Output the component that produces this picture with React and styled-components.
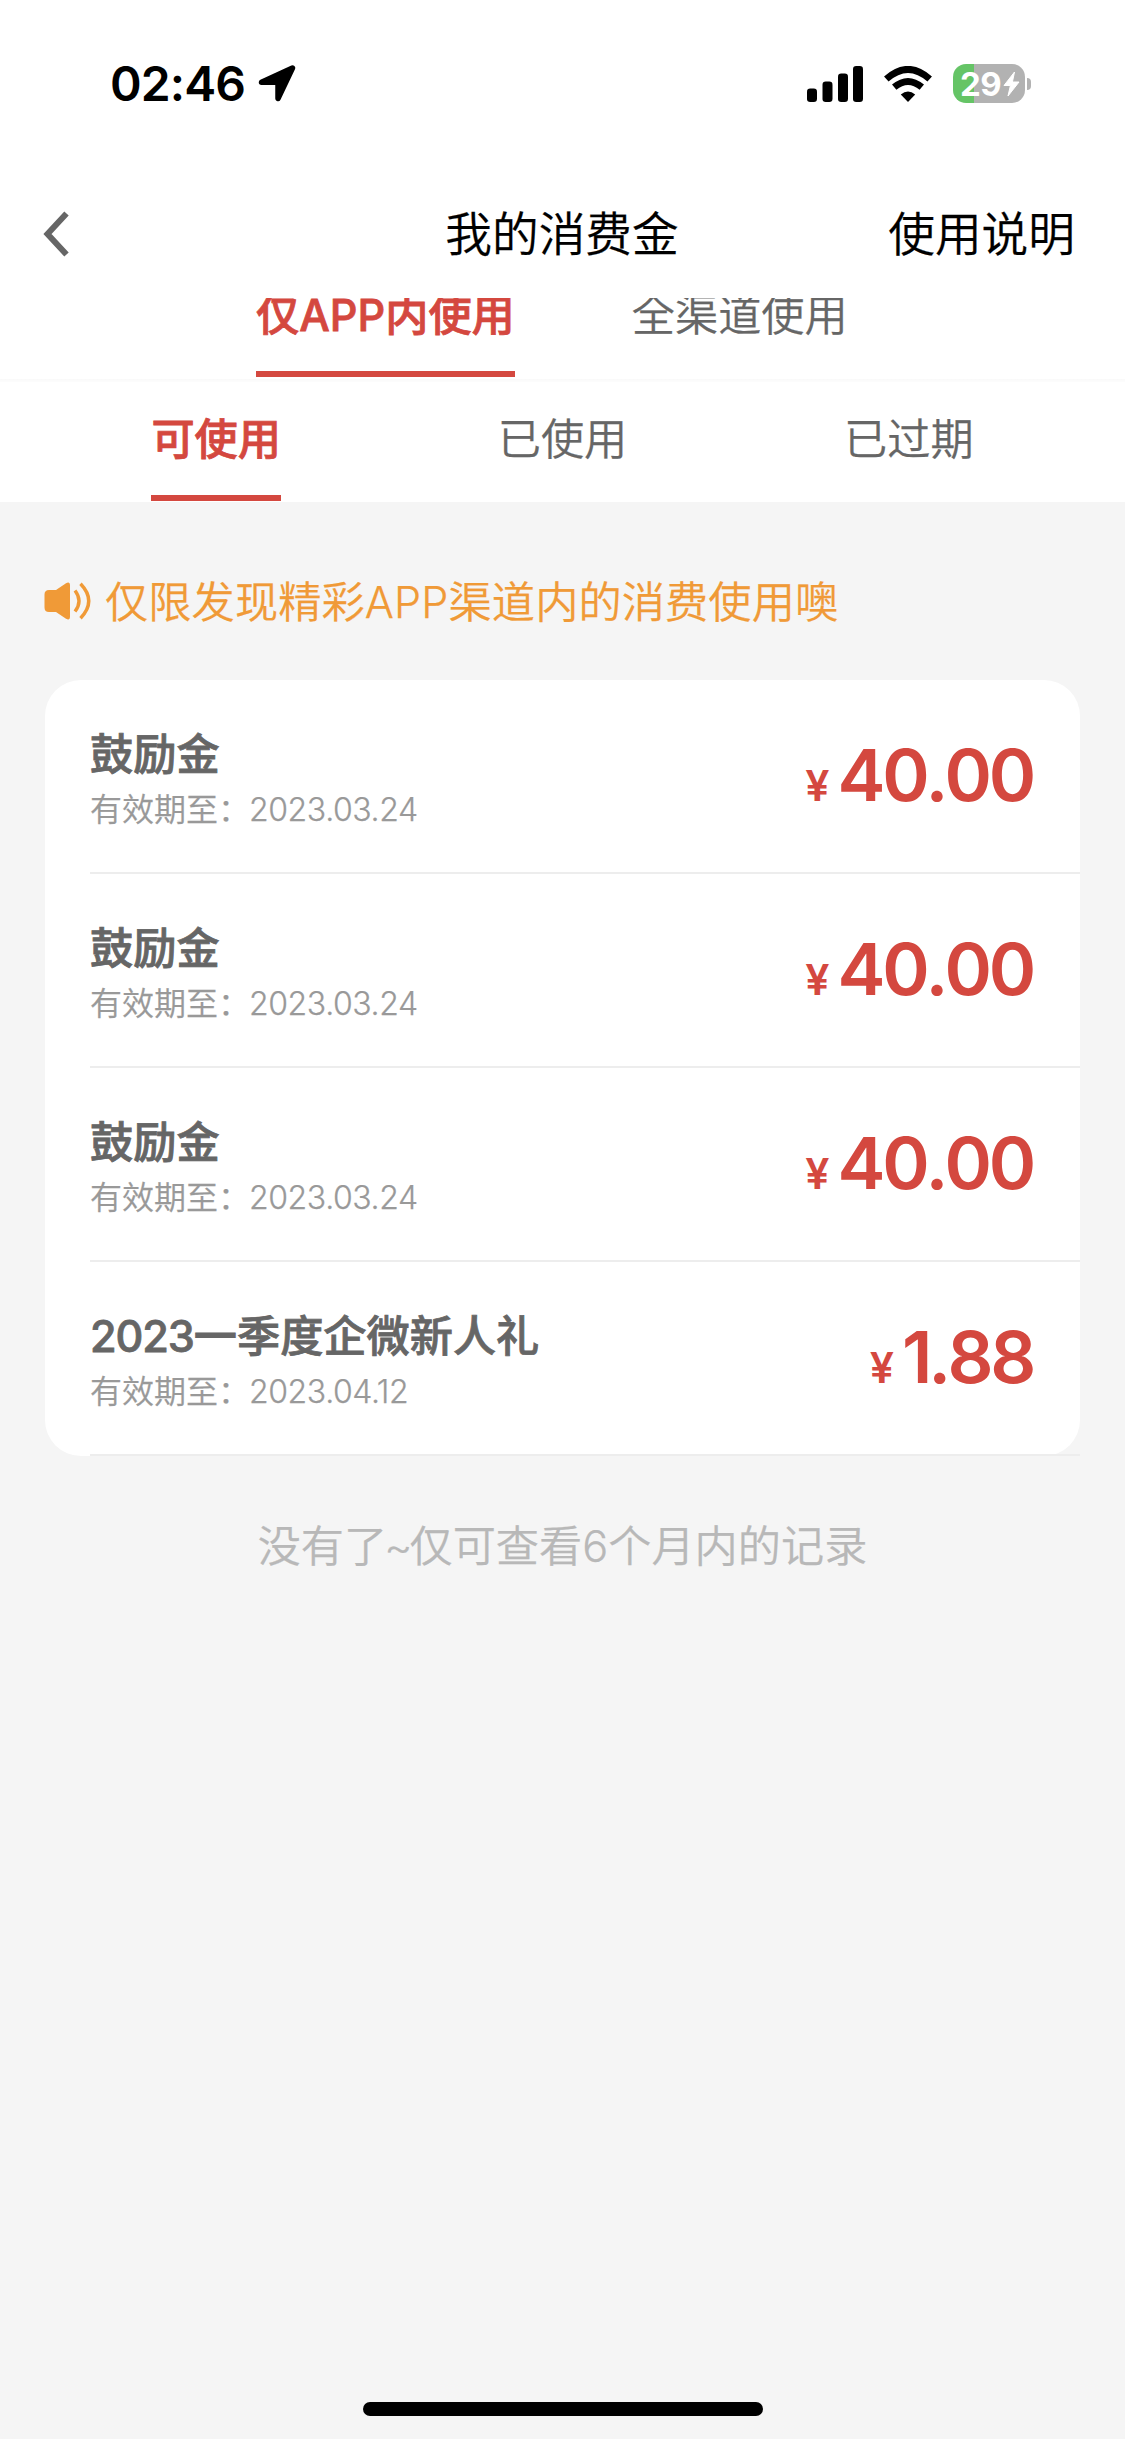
import React from "react";
import styled, { createGlobalStyle } from "styled-components";

const RED = "#d4483f";
const ORANGE = "#f09a37";

const GlobalStyle = createGlobalStyle`
  * { box-sizing: border-box; }
  body {
    margin: 0;
    background: #f5f5f5;
    font-family: Inter, "Noto Sans CJK SC", sans-serif;
    font-size: 43.2px;
    font-weight: 350;
    -webkit-font-smoothing: antialiased;
    -webkit-text-stroke-width: 0.25px;
  }
`;

const Screen = styled.div`
  width: 1125px;
  height: 2439px;
  display: flex;
  flex-direction: column;
  background: #f5f5f5;
  overflow: hidden;
`;

const StatusBar = styled.div`
  height: 169px;
  padding: 0 94px 2px 110px;
  display: flex;
  align-items: center;
  background: #fff;
  -webkit-text-stroke-width: 0;
`;

const Clock = styled.span`
  width: 148px;
  padding-top: 1px;
  font-size: 48px;
  font-weight: 600;
  line-height: 60px;
  letter-spacing: -0.9px;
  color: #000;
  white-space: nowrap;
`;

const StatusIcons = styled.div`
  margin-left: auto;
  display: flex;
  align-items: center;
`;

const SignalIcon = styled.svg`
  margin-right: 20px;
`;

const WifiIcon = styled.svg`
  margin-right: 21px;
`;

const Battery = styled.div`
  width: 72px;
  height: 39px;
  border-radius: 13px;
  display: flex;
  align-items: center;
  padding-left: 7px;
  background: linear-gradient(to right, #65c466 21px, #b2b2b2 21px);
`;

const BatteryLevel = styled.span`
  width: 43px;
  padding-top: 1px;
  font-size: 33px;
  font-weight: 650;
  line-height: 38px;
  letter-spacing: -0.5px;
  color: #fff;
`;

const BatteryNub = styled.span`
  width: 4px;
  height: 12px;
  margin-left: 2px;
  border-radius: 0 4px 4px 0;
  background: #b2b2b2;
`;

const NavBar = styled.header`
  height: 129px;
  padding: 1px 50px 0 43px;
  display: grid;
  grid-template-columns: 1fr auto 1fr;
  align-items: center;
  background: #fff;
  font-size: 46.7px;
  line-height: 60px;
  color: #000;
`;

const NavTitle = styled.h1`
  margin: 0 -3px 0 3px;
  font-size: inherit;
  font-weight: inherit;
`;

const NavAction = styled.span`
  justify-self: end;
`;

const ChannelTabs = styled.nav`
  height: 79px;
  padding-left: 256px;
  display: flex;
  align-items: flex-end;
  gap: 117px;
  overflow: hidden;
  background: #fff;
`;

const Divider = styled.div`
  height: 5px;
  border-top: 2px solid #fff;
  background: linear-gradient(#f9f9f9, #fdfdfd);
`;

const StatusTabs = styled.nav`
  height: 120px;
  padding: 0 43px 1px;
  display: grid;
  grid-template-columns: repeat(3, 1fr);
  justify-items: center;
  align-items: end;
  background: #fff;
`;

const Tab = styled.span`
  flex: none;
  height: ${(p) => p.$height}px;
  line-height: ${(p) => p.$line}px;
  font-weight: ${(p) => (p.$active ? 500 : 350)};
  -webkit-text-stroke-width: ${(p) => (p.$active ? 0.8 : 0.25)}px;
  color: ${(p) => (p.$active ? RED : "#666")};
  box-shadow: ${(p) => (p.$active ? `inset 0 -6px ${RED}` : "none")};
  white-space: nowrap;
`;

const Notice = styled.div`
  height: 178px;
  padding: 20px 0 0 44px;
  display: flex;
  align-items: center;
  gap: 13px;
  color: ${ORANGE};
  line-height: 60px;
  letter-spacing: 0.12px;
  white-space: nowrap;
`;

const NoticeText = styled.span`
  padding-top: 2px;
`;

const Card = styled.ul`
  height: 776px;
  margin: 0 45px;
  padding: 0 0 0 45px;
  display: grid;
  grid-template-rows: repeat(4, 1fr);
  list-style: none;
  border-radius: 36px;
  background: #fff;
`;

const Row = styled.li`
  display: flex;
  justify-content: space-between;
  padding: 48px 47px 0 0;
  border-bottom: 2px solid #ededed;
`;

const RowTitle = styled.div`
  font-weight: 500;
  line-height: 52px;
  color: #666;
  -webkit-text-stroke-width: 0.8px;
`;

const Year = styled.span`
  letter-spacing: -1.1px;
`;

const RowDate = styled.div`
  display: flex;
  margin-top: 10px;
  font-size: 32px;
  line-height: 40px;
  color: #999;
`;

const DateValue = styled.span`
  margin-left: -1px;
  letter-spacing: -0.4px;
`;

const Amount = styled.div`
  display: flex;
  align-items: baseline;
  gap: 8px;
  padding-top: 5px;
  font-size: 72px;
  font-weight: 600;
  line-height: 84px;
  letter-spacing: -3.3px;
  color: ${RED};
  -webkit-text-stroke-width: 0;
`;

const Yen = styled.span`
  font-size: 43px;
  letter-spacing: 0;
`;

const Point = styled.span`
  margin: 0 -0.5px 0 -1px;
`;

const EndNote = styled.p`
  margin: 60px 0 0;
  text-align: center;
  line-height: 60px;
  color: #b8b8b8;
`;

const Tilde = styled.span`
  margin: 0 -3px;
`;

const HomeIndicator = styled.div`
  width: 400px;
  height: 14px;
  margin: auto auto 23px 363px;
  border-radius: 7px;
  background: #000;
`;

const rows = [
  { title: "鼓励金", date: "2023.03.24", yuan: "40", cents: "00" },
  { title: "鼓励金", date: "2023.03.24", yuan: "40", cents: "00" },
  { title: "鼓励金", date: "2023.03.24", yuan: "40", cents: "00" },
  { year: "2023", title: "一季度企微新人礼", date: "2023.04.12", yuan: "1", cents: "88" },
];

export default function App() {
  return (
    <Screen>
      <GlobalStyle />
      <StatusBar>
        <Clock>02:46</Clock>
        <svg width="38" height="38" viewBox="0 0 38 38">
          <path d="M3.500 17.200 34.500 3 20 33.500V17.200Z" fill="#000" stroke="#000" strokeWidth="5.5" strokeLinejoin="round" />
        </svg>
        <StatusIcons>
          <SignalIcon width="57" height="36" viewBox="0 0 57 36">
            <rect x="0" y="22.5" width="10" height="13.5" rx="3.2" />
            <rect x="15.5" y="15.5" width="10" height="20.5" rx="3.2" />
            <rect x="31" y="7.5" width="10" height="28.5" rx="3.2" />
            <rect x="46" y="0" width="10" height="36" rx="3.2" />
          </SignalIcon>
          <WifiIcon width="48" height="36" viewBox="0 0 48 36">
            <path d="M24 36 16.8 28.6Q24 22.6 31.2 28.6Z" />
            <path d="M10.2 21.2Q24 9.6 37.8 21.2" fill="none" stroke="#000" strokeWidth="6.8" />
            <path d="M2.3 13Q24 -6.2 45.7 13" fill="none" stroke="#000" strokeWidth="6.8" />
          </WifiIcon>
          <Battery>
            <BatteryLevel>29</BatteryLevel>
            <svg width="17" height="26" viewBox="0 0 17 26">
              <path d="M11.5 1 1 14.5h6.4L5 25 16 11H9.4Z" fill="#fff" stroke="#fff" strokeWidth="1" strokeLinejoin="round" />
            </svg>
          </Battery>
          <BatteryNub />
        </StatusIcons>
      </StatusBar>

      <NavBar>
        <svg width="27" height="46" viewBox="0 0 27 46">
          <path d="M23.5 2.500 4.500 23 23.500 43.500" fill="none" stroke="#666" strokeWidth="6" />
        </svg>
        <NavTitle>我的消费金</NavTitle>
        <NavAction>使用说明</NavAction>
      </NavBar>

      <ChannelTabs>
        <Tab $active $height={124} $line={125}>仅APP内使用</Tab>
        <Tab $height={124} $line={125}>全渠道使用</Tab>
      </ChannelTabs>
      <Divider />
      <StatusTabs>
        <Tab $active $height={119} $line={115}>可使用</Tab>
        <Tab $height={119} $line={115}>已使用</Tab>
        <Tab $height={119} $line={115}>已过期</Tab>
      </StatusTabs>

      <Notice>
        <svg width="48" height="38" viewBox="0 0 48 38">
          <path d="M5 8h7L22 1.2Q26 -1 26 3.500V34.500Q26 39 22 36.800L12 30H5Q.5 30 .5 25.500V12.500Q.5 8 5 8Z" fill={ORANGE} />
          <path d="M31 8.500Q39 19 31 29.500M36.500 1.800Q53 19 36.500 36.200" fill="none" stroke={ORANGE} strokeWidth="3.4" />
        </svg>
        <NoticeText>仅限发现精彩APP渠道内的消费使用噢</NoticeText>
      </Notice>

      <Card>
        {rows.map((row, i) => (
          <Row key={i}>
            <div>
              <RowTitle>
                {row.year && <Year>{row.year}</Year>}
                {row.title}
              </RowTitle>
              <RowDate>
                有效期至：<DateValue>{row.date}</DateValue>
              </RowDate>
            </div>
            <Amount>
              <Yen>¥</Yen>
              <span>
                {row.yuan}
                <Point>.</Point>
                {row.cents}
              </span>
            </Amount>
          </Row>
        ))}
      </Card>
      <EndNote>
        没有了<Tilde>~</Tilde>仅可查看6个月内的记录
      </EndNote>
      <HomeIndicator />
    </Screen>
  );
}
